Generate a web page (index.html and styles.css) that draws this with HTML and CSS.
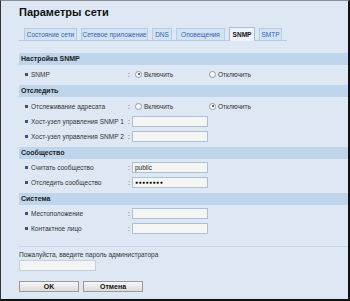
FILE: index.html
```html
<!DOCTYPE html>
<html lang="ru">
<head>
  <meta charset="UTF-8" />
  <title>Параметры сети</title>
  <link rel="stylesheet" href="styles.css">
</head>
<body>
  <div class="frame">
    <h1>Параметры сети</h1>

    <!-- вкладки -->
    <div class="tabs">
      <span class="tab w-status">Состояние сети</span>
      <span class="tab w-app">Сетевое приложение</span>
      <span class="tab w-dns">DNS</span>
      <span class="tab w-alert">Оповещения</span>
      <span class="tab active w-snmp">SNMP</span>
      <span class="tab w-smtp">SMTP</span>
    </div>

    <div class="section-title first">Настройка SNMP</div>
    <div class="section-body">
      <div class="row radio-row">
        <span class="label">SNMP</span>
        <span class="colon">:</span>
        <span class="radio checked"></span><span class="opt">Включить</span>
        <span class="radio"></span><span class="opt">Отключить</span>
      </div>
    </div>

    <div class="section-title">Отследить</div>
    <div class="section-body">
      <div class="row radio-row">
        <span class="label">Отслеживание адресата</span>
        <span class="colon">:</span>
        <span class="radio"></span><span class="opt">Включить</span>
        <span class="radio checked"></span><span class="opt">Отключить</span>
      </div>
      <div class="row">
        <span class="label">Хост-узел управления SNMP 1</span>
        <span class="colon">:</span>
        <span class="field"></span>
      </div>
      <div class="row">
        <span class="label">Хост-узел управления SNMP 2</span>
        <span class="colon">:</span>
        <span class="field"></span>
      </div>
    </div>

    <div class="section-title">Сообщество</div>
    <div class="section-body">
      <div class="row">
        <span class="label">Считать сообщество</span>
        <span class="colon">:</span>
        <span class="field">public</span>
      </div>
      <div class="row">
        <span class="label">Отследить сообщество</span>
        <span class="colon">:</span>
        <span class="field dots">&#9679;&#9679;&#9679;&#9679;&#9679;&#9679;&#9679;&#9679;</span>
      </div>
    </div>

    <div class="section-title">Система</div>
    <div class="section-body last">
      <div class="row">
        <span class="label">Местоположение</span>
        <span class="colon">:</span>
        <span class="field"></span>
      </div>
      <div class="row">
        <span class="label">Контактное лицо</span>
        <span class="colon">:</span>
        <span class="field"></span>
      </div>
    </div>

    <div class="password">
      <div class="hint">Пожалуйста, введите пароль администратора</div>
      <span class="field pass"></span>
    </div>

    <div class="buttons">
      <span class="btn">OK</span>
      <span class="btn">Отмена</span>
    </div>
  </div>
</body>
</html>
```

FILE: styles.css
```css
body {
  margin: 0;
  font-family: 'Liberation Sans', Arial, sans-serif;
  color: #222;
}
.frame {
  width: 350px;
  height: 301px;
  box-sizing: border-box;
  background: #dde8f4;
  border-top: 1px solid #8a8f96;
  border-left: 1px solid #333;
  border-right: 2px solid #111;
  border-bottom: 2px solid #111;
  padding-left: 18px;
  overflow: hidden;
}
h1 {
  margin: 4px 0 0;
  font-size: 11px;
  font-weight: bold;
  line-height: 14px;
  color: #111;
}
/* вкладки */
.tabs {
  display: flex;
  align-items: flex-end;
  gap: 4px;
  width: 263px;
  height: 14px;
  margin-top: 7px;
  padding-left: 5px;
  border-bottom: 1px solid #b8cbe0;
}
.tab {
  box-sizing: border-box;
  height: 12px;
  line-height: 11px;
  text-align: center;
  white-space: nowrap;
  font-size: 6.5px;
  color: #3563b4;
  background: #d3e2f3;
  border: 1px solid #b6cbe4;
  border-bottom: none;
}
.w-status { width: 53px; }
.w-app { width: 67px; }
.w-dns { width: 20px; }
.w-alert { width: 49px; }
.w-snmp { width: 26px; }
.w-smtp { width: 23px; }
.tab.active {
  height: 14px;
  line-height: 14px;
  color: #111;
  font-weight: bold;
  background: #eef3f9;
  border-color: #a9bdd6;
  margin-bottom: -1px;
}
.section-title {
  height: 12px;
  line-height: 12px;
  padding-left: 2px;
  background: #bed5ec;
  font-size: 7px;
  font-weight: bold;
  color: #1d1d1d;
}
.section-title.first {
  margin-top: 12px;
}
.section-body {
  padding: 1px 0 3px;
}
.section-body.last {
  padding-bottom: 10px;
  border-bottom: 1px solid #c5d6e8;
}
.row {
  display: flex;
  align-items: center;
  height: 15px;
  font-size: 6.5px;
  color: #333;
  white-space: nowrap;
}
.radio-row {
  height: 16px;
}
.label {
  display: flex;
  align-items: center;
  width: 103px;
  padding-left: 6px;
}
.label::before {
  content: "";
  width: 3px;
  height: 3px;
  margin-right: 3px;
  background: #34528f;
}
.colon {
  width: 4px;
}
.radio {
  width: 5px;
  height: 5px;
  margin: 0 2px 0 3px;
  border: 1px solid #8f99a6;
  border-radius: 50%;
  background: #fff;
  position: relative;
}
.radio.checked::after {
  content: "";
  position: absolute;
  left: 1.5px;
  top: 1.5px;
  width: 2px;
  height: 2px;
  border-radius: 50%;
  background: #333;
}
.opt {
  width: 62px;
}
.field {
  box-sizing: border-box;
  width: 76px;
  height: 11px;
  line-height: 9px;
  padding-left: 2px;
  background: #f5f5f4;
  border: 1px solid #aec0d6;
  font-size: 6.5px;
  color: #222;
}
.field.dots {
  font-size: 5px;
  letter-spacing: 0.5px;
  color: #000;
}
.password {
  padding-top: 3px;
  font-size: 6.5px;
  color: #333;
  white-space: nowrap;
}
.hint {
  line-height: 10px;
}
.field.pass {
  display: block;
  width: 77px;
  border-color: #c3cfdc;
  background: #f4f4f4;
}
.buttons {
  display: flex;
  gap: 4px;
  margin-top: 10px;
}
.btn {
  box-sizing: border-box;
  width: 60px;
  height: 11px;
  line-height: 9px;
  text-align: center;
  font-size: 7px;
  font-weight: bold;
  color: #111;
  background: linear-gradient(#f6f6f6, #dcdcdc);
  border: 1px solid #9a9a9a;
}
```
